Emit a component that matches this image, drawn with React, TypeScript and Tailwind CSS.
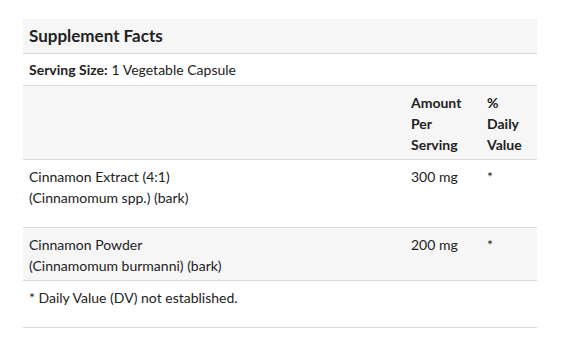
const rows = [
  { name: "Cinnamon Extract (4:1)", latin: "(Cinnamomum spp.) (bark)", amount: "300 mg", dv: "*", h: "h-[68px]", bg: "bg-white" },
  { name: "Cinnamon Powder", latin: "(Cinnamomum burmanni) (bark)", amount: "200 mg", dv: "*", h: "h-[53px]", bg: "bg-[#f6f6f6]" },
];

export default function App() {
  return (
    <div className="w-[561px] h-[344px] bg-white pt-[19px] pl-[23px] text-[#222] font-['Lato',sans-serif]">
      <div className="w-[514px]">
        <div className="h-[35px] bg-[#f6f6f6] border-b border-[#dcdcdc] px-[6px] flex items-center text-[17px] font-bold">
          Supplement Facts
        </div>
        <div className="h-[32px] border-b border-[#dcdcdc] px-[6px] flex items-center text-[14px]">
          <span className="font-bold mr-1">Serving Size:</span>1 Vegetable Capsule
        </div>
        <div className="h-[74px] bg-[#f6f6f6] border-b border-[#dcdcdc] flex text-[14px] font-bold leading-[21px] pt-[6px]">
          <div className="flex-1" />
          <div className="w-[76px] px-[6px]">Amount<br />Per<br />Serving</div>
          <div className="w-[56px] px-[6px]">%<br />Daily<br />Value</div>
        </div>
        {rows.map((r) => (
          <div key={r.name} className={`${r.h} ${r.bg} border-b border-[#dcdcdc] flex text-[14px] leading-[21px] pt-[6px]`}>
            <div className="flex-1 px-[6px]">{r.name}<br />{r.latin}</div>
            <div className="w-[76px] px-[6px]">{r.amount}</div>
            <div className="w-[56px] px-[6px]">{r.dv}</div>
          </div>
        ))}
        <div className="h-[47px] border-b border-[#dcdcdc] px-[6px] pt-[6px] text-[14px] leading-[21px]">
          * Daily Value (DV) not established.
        </div>
      </div>
    </div>
  );
}
